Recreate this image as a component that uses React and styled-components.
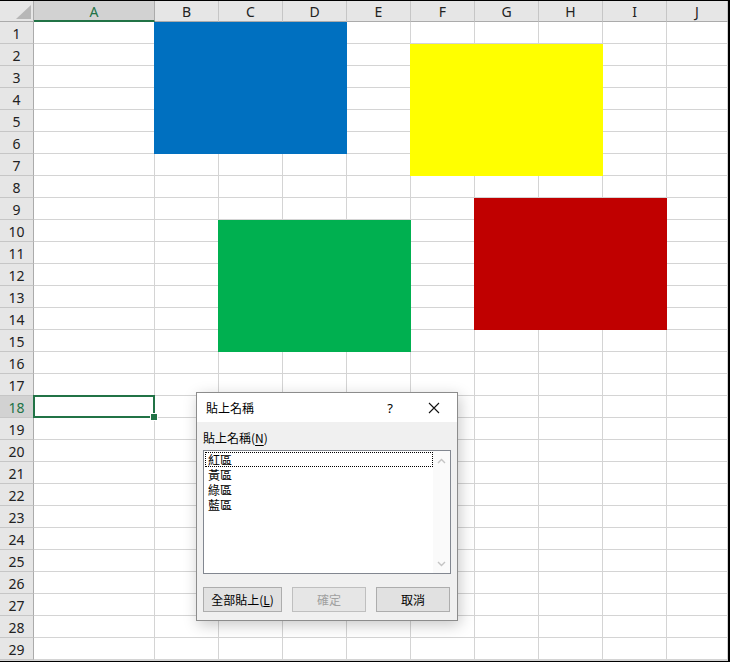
import React from 'react'
import styled, { createGlobalStyle } from 'styled-components'

const GlobalStyle = createGlobalStyle`
  html, body {
    margin: 0;
    padding: 0;
    background: #fff;
  }
  body {
    font-family: "Noto Sans", "Noto Sans CJK TC", sans-serif;
  }
  * { box-sizing: border-box; }
`;

const COLS = ['A', 'B', 'C', 'D', 'E', 'F', 'G', 'H', 'I', 'J'];
const ROWS = Array.from({ length: 29 }, (_, i) => i + 1);
const SELECTED_ROW = 18;

const SHAPES = [
  { color: '#0070C0', col: '3 / 6', row: '2 / 8' },
  { color: '#FFFF00', col: '7 / 10', row: '3 / 9' },
  { color: '#00B050', col: '4 / 7', row: '11 / 17' },
  { color: '#C00000', col: '8 / 11', row: '10 / 16' },
];

const NAMES = ['紅區', '黃區', '綠區', '藍區'];

export default function App() {
  return (
    <>
      <GlobalStyle />
      <Sheet>
        <Corner $r={1} $c={1}>
          <svg width="15" height="14" viewBox="0 0 15 14">
            <polygon points="15,0 15,14 0,14" fill="#b7b7b7" />
          </svg>
        </Corner>
        {COLS.map((c, i) => (
          <ColHead key={c} $r={1} $c={i + 2} $active={c === 'A'}>{c}</ColHead>
        ))}
        {ROWS.map((r) => (
          <React.Fragment key={r}>
            <RowHead $r={r + 1} $c={1} $active={r === SELECTED_ROW}>{r}</RowHead>
            {COLS.map((c, i) => (
              <Cell key={c} $r={r + 1} $c={i + 2} $sel={r === SELECTED_ROW && c === 'A'}>
                {r === SELECTED_ROW && c === 'A' && (
                  <>
                    <Selection />
                    <FillHandle />
                  </>
                )}
              </Cell>
            ))}
          </React.Fragment>
        ))}
        {SHAPES.map((s) => (
          <Shape key={s.color} $color={s.color} $col={s.col} $row={s.row} />
        ))}

        <Dialog>
          <TitleBar>
            <Title>貼上名稱</Title>
            <Help>?</Help>
            <Close>
              <svg width="12" height="12" viewBox="0 0 12 12">
                <path d="M1 1 L11 11 M11 1 L1 11" stroke="#111" strokeWidth="1.1" fill="none" />
              </svg>
            </Close>
          </TitleBar>
          <Body>
            <Label>貼上名稱(<u>N</u>)</Label>
            <ListBox>
              <Items>
                {NAMES.map((n, i) => (
                  <Item key={n} $focus={i === 0}>{n}</Item>
                ))}
              </Items>
              <ScrollBar>
                <svg width="9" height="6" viewBox="0 0 9 6">
                  <path d="M1 5 L4.5 1.5 L8 5" stroke="#c4c4c4" strokeWidth="1.4" fill="none" />
                </svg>
                <svg width="9" height="6" viewBox="0 0 9 6">
                  <path d="M1 1 L4.5 4.5 L8 1" stroke="#c4c4c4" strokeWidth="1.4" fill="none" />
                </svg>
              </ScrollBar>
            </ListBox>
            <Buttons>
              <Button $w={79}>全部貼上(<u>L</u>)</Button>
              <Button $w={74} disabled>確定</Button>
              <Button $w={74}>取消</Button>
            </Buttons>
          </Body>
        </Dialog>
      </Sheet>
    </>
  )
}

const Sheet = styled.div`
  position: relative;
  display: grid;
  grid-template-columns: 34px 121px repeat(8, 64px) 61px;
  grid-template-rows: 21px repeat(29, 22px);
  width: 730px;
  border-top: 1px solid #000;
  border-right: 2px solid #000;
  border-bottom: 1px solid #000;
  padding-bottom: 1px;
  background: #d4d4d4;
  overflow: hidden;
`;

const Placed = styled.div`
  grid-row: ${(p) => p.$r};
  grid-column: ${(p) => p.$c};
`;

const Corner = styled(Placed)`
  background: #e6e6e6;
  border-right: 1px solid #ababab;
  border-bottom: 1px solid #ababab;
  display: flex;
  align-items: flex-end;
  justify-content: flex-end;
  padding: 0 2px 2px 0;
`;

const ColHead = styled(Placed)`
  background: ${(p) => (p.$active ? '#d2d2d2' : '#e6e6e6')};
  color: ${(p) => (p.$active ? '#217346' : '#222')};
  border-right: 1px solid ${(p) => (p.$active ? '#ababab' : '#c6c6c6')};
  border-bottom: ${(p) => (p.$active ? '2px solid #217346' : '1px solid #ababab')};
  font-size: 14px;
  display: flex;
  align-items: center;
  justify-content: center;
  padding-top: 1px;
`;

const RowHead = styled(Placed)`
  background: ${(p) => (p.$active ? '#d2d2d2' : '#e6e6e6')};
  color: ${(p) => (p.$active ? '#217346' : '#222')};
  border-right: 1px solid #ababab;
  border-bottom: 1px solid #c6c6c6;
  font-size: 14px;
  display: flex;
  align-items: center;
  justify-content: center;
  padding-top: 1px;
`;

const Cell = styled(Placed)`
  position: relative;
  background: #fff;
  border-right: 1px solid #d4d4d4;
  border-bottom: 1px solid #d4d4d4;
  z-index: ${(p) => (p.$sel ? 3 : 0)};
`;

const Selection = styled.div`
  position: absolute;
  left: -1px;
  top: -1px;
  right: -1px;
  bottom: -1px;
  border: 2px solid #217346;
`;

const FillHandle = styled.div`
  position: absolute;
  right: -3px;
  bottom: -3px;
  width: 6px;
  height: 6px;
  background: #217346;
  outline: 1px solid #fff;
`;

const Shape = styled.div`
  grid-row: ${(p) => p.$row};
  grid-column: ${(p) => p.$col};
  margin-left: -1px;
  background: ${(p) => p.$color};
  z-index: 1;
`;

const Dialog = styled.div`
  position: absolute;
  left: 196px;
  top: 391px;
  width: 262px;
  height: 229px;
  border: 1px solid #8c8c8c;
  background: #f0f0f0;
  box-shadow: 2px 4px 14px rgba(0, 0, 0, 0.22);
  z-index: 5;
  display: flex;
  flex-direction: column;
  font-family: "Noto Sans CJK TC", "Noto Sans", sans-serif;
  font-size: 12px;
  color: #000;
`;

const TitleBar = styled.div`
  height: 29px;
  background: #fff;
  display: flex;
  align-items: center;
  padding-left: 9px;
`;

const Title = styled.span`
  flex: 1;
  font-size: 12px;
`;

const Help = styled.span`
  width: 14px;
  text-align: center;
  font-family: "Noto Sans", sans-serif;
  font-size: 13px;
  margin-right: 31px;
`;

const Close = styled.span`
  width: 12px;
  height: 12px;
  display: flex;
  margin-right: 17px;
`;

const Body = styled.div`
  flex: 1;
  padding: 8px 6px 0 6px;
  display: flex;
  flex-direction: column;
`;

const Label = styled.div`
  height: 16px;
  line-height: 16px;
  margin-bottom: 4px;
  u { text-underline-offset: 2px; }
`;

const ListBox = styled.div`
  width: 248px;
  height: 124px;
  background: #fff;
  border: 1px solid #828790;
  display: flex;
`;

const Items = styled.div`
  flex: 1;
  padding: 1px 0 0 1px;
`;

const Item = styled.div`
  height: 15px;
  line-height: 15px;
  padding-left: 3px;
  outline: 1px dotted ${(p) => (p.$focus ? '#000' : 'transparent')};
  outline-offset: -1px;
`;

const ScrollBar = styled.div`
  width: 17px;
  display: flex;
  flex-direction: column;
  align-items: center;
  justify-content: space-between;
  padding: 7px 0 6px;
  background: #fafafa;
`;

const Buttons = styled.div`
  display: flex;
  gap: 10px;
  margin-top: 13px;
`;

const Button = styled.button`
  width: ${(p) => p.$w}px;
  height: 25px;
  padding: 0;
  background: #e1e1e1;
  border: 1px solid #adadad;
  border-radius: 0;
  font-family: "Noto Sans CJK TC", "Noto Sans", sans-serif;
  font-size: 12px;
  color: #000;

  &:disabled {
    color: #a0a0a0;
    border-color: #bfbfbf;
    background: #e6e6e6;
  }
`;
